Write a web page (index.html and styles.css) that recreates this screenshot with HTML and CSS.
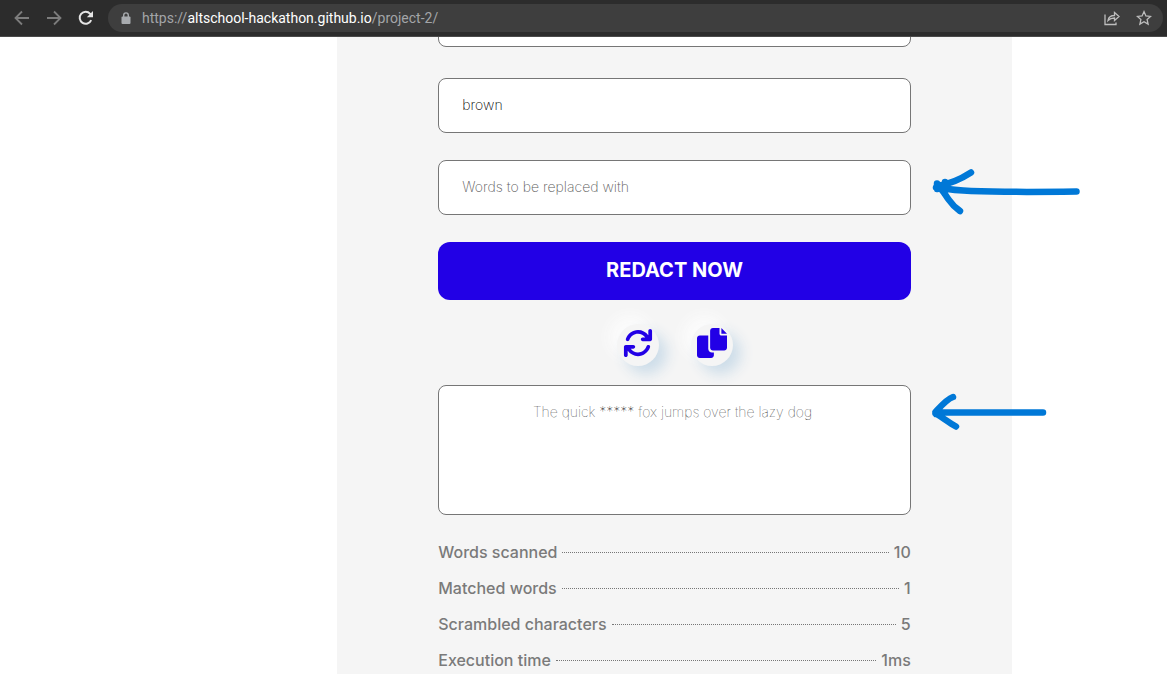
FILE: index.html
```html
<!DOCTYPE html>
<html lang="en">
<head>
<meta charset="utf-8">
<meta name="viewport" content="width=device-width, initial-scale=1">
<title>Redact</title>
<link rel="stylesheet" href="styles.css">
</head>
<body>
<header class="toolbar">
  <nav class="nav" aria-label="Browser">
    <button class="nav-button" type="button" aria-label="Back"><svg viewBox="0 0 16 16"><path d="M15 8H2M8 1.500L1.500 8l6.500 6.500"/></svg></button>
    <button class="nav-button" type="button" aria-label="Forward"><svg viewBox="0 0 16 16"><path d="M1 8h13M8 1.500l6.500 6.500-6.500 6.500"/></svg></button>
    <button class="nav-button nav-active" type="button" aria-label="Reload"><svg viewBox="0 0 16 16"><path d="M13.2 10.2A6 6 0 1 1 12.2 3.8L14 5.6"/><path class="solid" d="M15 1v6.200H8.800z"/></svg></button>
  </nav>
  <div class="address">
    <svg class="lock" viewBox="0 0 10 12"><path class="shackle" d="M2.700 5V3.200a2.300 2.300 0 0 1 4.600 0V5"/><rect x="0.500" y="4.500" width="9" height="7.500" rx="1"/></svg>
    <a class="url" href="#">https://<span class="host">altschool-hackathon.github.io</span>/project-2/</a>
    <button class="nav-button address-button" type="button" aria-label="Share"><svg viewBox="0 0 16 16"><path d="M1 4.500v10h11V12.500M4 10.500C4.500 7.500 7 5.500 10.500 5.500V2.500L15 6.500 10.500 10.500V8C8 8 6 8.500 4 10.500z"/></svg></button>
    <button class="nav-button address-button" type="button" aria-label="Bookmark"><svg viewBox="0 0 16 16"><path d="M8 1.600l1.900 4.300 4.700.5-3.500 3.100 1 4.600L8 11.700l-4.100 2.400 1-4.600L1.400 6.400l4.700-.5z"/></svg></button>
  </div>
</header>
<main class="page">
  <form class="panel">
    <textarea class="box source" aria-label="Text to redact"></textarea>
    <input class="box field" type="text" value="brown" aria-label="Words to redact">
    <div class="marked">
      <input class="box field" type="text" placeholder="Words to be replaced with" aria-label="Words to be replaced with">
      <svg class="arrow" viewBox="0 0 170 60" aria-hidden="true"><path d="M165.500 31.500C130 32 85 32 60 31C45 30.500 35 29 25 27.500M60 12.500C50 19 40 24 26 26M26 26C32 29 34 35 38 40Q42 46 49 51M26 23.500V28M34 22V26M26 29L36 27"/></svg>
    </div>
    <button class="redact" type="button">REDACT NOW</button>
    <div class="tools">
      <button class="tool" type="button" aria-label="Reset"><svg viewBox="0 0 512 512"><path d="M464 16c-17.670 0-32 14.310-32 32v74.090C392.100 66.520 327.400 32 256 32C161.500 32 78.590 92.340 49.580 182.200c-5.438 16.810 3.797 34.880 20.610 40.280c16.890 5.500 34.880-3.812 40.300-20.590C130.900 138.500 189.400 96 256 96c50.500 0 96.260 24.550 124.400 64H336c-17.670 0-32 14.310-32 32s14.330 32 32 32h128c17.670 0 32-14.310 32-32V48C496 30.310 481.700 16 464 16zM441.800 289.600c-16.920-5.438-34.880 3.812-40.300 20.590C381.100 373.500 322.600 416 256 416c-50.500 0-96.250-24.550-124.400-64H176c17.670 0 32-14.310 32-32s-14.330-32-32-32h-128c-17.670 0-32 14.310-32 32v144c0 17.690 14.330 32 32 32s32-14.310 32-32v-74.090C119.900 445.500 184.600 480 255.100 480c94.450 0 177.400-60.340 206.400-150.200C467.900 313 458.600 294.100 441.800 289.600z"/></svg></button>
      <button class="tool" type="button" aria-label="Copy"><svg viewBox="0 0 512 512"><path d="M384 96L384 0h-112c-26.510 0-48 21.490-48 48v288c0 26.510 21.490 48 48 48H464c26.510 0 48-21.490 48-48V128h-95.100C398.400 128 384 113.600 384 96zM416 0v96h96L416 0zM192 352V128h-144c-26.510 0-48 21.490-48 48v288c0 26.510 21.490 48 48 48h192c26.510 0 48-21.490 48-48L288 416h-32C220.700 416 192 387.300 192 352z"/></svg></button>
    </div>
    <div class="marked">
      <textarea class="box result" readonly aria-label="Redacted text">The quick ***** fox jumps over the lazy dog</textarea>
      <svg class="arrow" viewBox="0 0 170 60" aria-hidden="true"><path d="M132 27.500H26M42 12C36 14 30 21 24.500 27M24.500 28.500C31 32 37 37 45 41.500M25 29L32 28"/></svg>
    </div>
    <dl class="stats">
      <div class="stat"><dt>Words scanned</dt><dd>10</dd></div>
      <div class="stat"><dt>Matched words</dt><dd>1</dd></div>
      <div class="stat"><dt>Scrambled characters</dt><dd>5</dd></div>
      <div class="stat"><dt>Execution time</dt><dd>1ms</dd></div>
    </dl>
  </form>
</main>
</body>
</html>
```
FILE: styles.css
```css
* { box-sizing: border-box; }

body {
  margin: 0;
  min-height: 100vh;
  display: flex;
  flex-direction: column;
  background: #fff;
  font-family: Inter, "Liberation Sans", sans-serif;
}

button { border: 0; padding: 0; cursor: pointer; }

/* Browser bar */
.toolbar {
  position: relative;
  z-index: 1;
  display: flex;
  align-items: center;
  gap: 14px;
  height: 37px;
  padding: 0 4px 0 14px;
  background: #2c2c2c;
  border-bottom: 1px solid #4a4a4a;
}
.nav { display: flex; gap: 16px; }
.nav-button { display: flex; background: none; color: #7c7c7c; }
.nav-button svg {
  width: 16px;
  height: 16px;
  fill: none;
  stroke: currentColor;
  stroke-width: 1.8;
}
.nav-button .solid { fill: currentColor; stroke: none; }
.nav-active { color: #e4e4e4; }
.nav-active svg { stroke-width: 2; }
.address {
  flex: 1;
  display: flex;
  align-items: center;
  gap: 16px;
  height: 28px;
  padding: 0 11px 0 13px;
  border-radius: 14px;
  background: #3e3e3e;
}
.lock { width: 10px; height: 12px; fill: #a8abaf; }
.shackle { fill: none; stroke: #a8abaf; stroke-width: 1.4; }
.url {
  flex: 1;
  margin-left: -5px;
  font: 14px/20px Roboto, "Open Sans", sans-serif;
  color: #a3a5a8;
  text-decoration: none;
}
.host { color: #fff; }
.address-button { color: #bdbdbd; }
.address-button svg { stroke-width: 1.3; }

/* Page */
.page {
  flex: 1;
  display: grid;
  grid-template-columns: 337fr 675fr 155fr;
}
.panel {
  grid-column: 2;
  padding: 0 15%;
  background: #f5f5f5;
}
.box {
  display: block;
  width: 100%;
  border: 1px solid #767676;
  border-radius: 8px;
  background: #fff;
  font: 200 14px/20px Inter, sans-serif;
  resize: none;
}
.source { height: 130px; margin: -120px 0 31px; }
.field {
  height: 55px;
  margin-bottom: 27px;
  padding: 0 23px 2px;
  color: #000;
}
.field::placeholder { color: #606060; opacity: 1; }
.marked { position: relative; }
.arrow {
  position: absolute;
  top: 0;
  left: 100%;
  width: 170px;
  height: 60px;
  fill: none;
  stroke: #0078d7;
  stroke-width: 6.500;
  stroke-linecap: round;
  stroke-linejoin: round;
}
.redact {
  display: block;
  width: 100%;
  height: 58px;
  padding-bottom: 2px;
  border-radius: 12px;
  background: #2200e6;
  color: #fff;
  font: 700 20px/24px Inter, sans-serif;
}
.tools {
  display: flex;
  justify-content: center;
  gap: 32px;
  padding: 24px 0 19px;
}
.tool {
  display: flex;
  align-items: center;
  justify-content: center;
  width: 42px;
  height: 42px;
  padding-bottom: 4px;
  border-radius: 50%;
  background: #f5f5f5;
  box-shadow: 8px 8px 14px #cddde9, -8px -8px 14px #fcfcfc;
}
.tool svg { flex: none; width: 30px; height: 30px; fill: #2200e6; }
.result {
  height: 130px;
  padding: 16px 24px 16px 20px;
  color: #222;
  font-weight: 100;
  text-align: center;
}

.stats {
  margin: 0;
  padding-top: 19px;
  color: #7a7a7a;
  font-size: 16px;
  font-weight: 500;
  line-height: 36px;
}
.stat { display: flex; align-items: center; gap: 5px; }
.stat::before {
  content: "";
  order: 1;
  flex: 1;
  border-top: 1px dotted #767676;
}
.stat dd { order: 2; margin: 0; }
```
